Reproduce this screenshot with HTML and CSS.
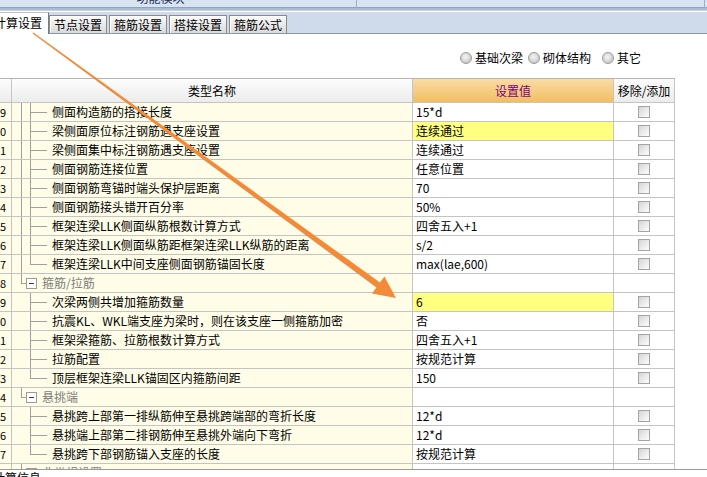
FILE: index.html
```html
<!DOCTYPE html>
<html lang="zh">
<head>
<meta charset="utf-8">
<title>计算设置</title>
<link rel="stylesheet" href="styles.css">
</head>
<body>
<div class="app">
  <div class="topbar">
    <div class="module"><span>功能模块</span></div>
    <div class="module2"></div>
  </div>
  <div class="tabstrip">
    <div class="tab active">计算设置</div>
    <div class="tab">节点设置</div>
    <div class="tab">箍筋设置</div>
    <div class="tab">搭接设置</div>
    <div class="tab">箍筋公式</div>
  </div>
  <div class="options">
    <label class="opt"><span class="radio"></span>基础次梁</label>
    <label class="opt opt2"><span class="radio"></span>砌体结构</label>
    <label class="opt opt3"><span class="radio"></span>其它</label>
  </div>
  <div class="grid">
    <div class="row head">
      <div class="c num"></div>
      <div class="c name hname">类型名称</div>
      <div class="c val hval">设置值</div>
      <div class="c chk hchk">移除/添加</div>
    </div>

    <div class="row"><div class="c num">9</div><div class="c name"><span class="t1 line"></span><span class="t2"></span><span class="txt">侧面构造筋的搭接长度</span></div><div class="c val">15*d</div><div class="c chk"><span class="cb"></span></div></div>
    <div class="row"><div class="c num">10</div><div class="c name"><span class="t1 line"></span><span class="t2"></span><span class="txt">梁侧面原位标注钢筋遇支座设置</span></div><div class="c val yellow">连续通过</div><div class="c chk"><span class="cb"></span></div></div>
    <div class="row"><div class="c num">11</div><div class="c name"><span class="t1 line"></span><span class="t2"></span><span class="txt">梁侧面集中标注钢筋遇支座设置</span></div><div class="c val">连续通过</div><div class="c chk"><span class="cb"></span></div></div>
    <div class="row"><div class="c num">12</div><div class="c name"><span class="t1 line"></span><span class="t2"></span><span class="txt">侧面钢筋连接位置</span></div><div class="c val">任意位置</div><div class="c chk"><span class="cb"></span></div></div>
    <div class="row"><div class="c num">13</div><div class="c name"><span class="t1 line"></span><span class="t2"></span><span class="txt">侧面钢筋弯锚时端头保护层距离</span></div><div class="c val">70</div><div class="c chk"><span class="cb"></span></div></div>
    <div class="row"><div class="c num">14</div><div class="c name"><span class="t1 line"></span><span class="t2"></span><span class="txt">侧面钢筋接头错开百分率</span></div><div class="c val">50%</div><div class="c chk"><span class="cb"></span></div></div>
    <div class="row"><div class="c num">15</div><div class="c name"><span class="t1 line"></span><span class="t2"></span><span class="txt">框架连梁LLK侧面纵筋根数计算方式</span></div><div class="c val">四舍五入+1</div><div class="c chk"><span class="cb"></span></div></div>
    <div class="row"><div class="c num">16</div><div class="c name"><span class="t1 line"></span><span class="t2"></span><span class="txt">框架连梁LLK侧面纵筋距框架连梁LLK纵筋的距离</span></div><div class="c val">s/2</div><div class="c chk"><span class="cb"></span></div></div>
    <div class="row"><div class="c num">17</div><div class="c name"><span class="t1 line"></span><span class="t2 last"></span><span class="txt">框架连梁LLK中间支座侧面钢筋锚固长度</span></div><div class="c val">max(lae,600)</div><div class="c chk"><span class="cb"></span></div></div>

    <div class="row"><div class="c num">18</div><div class="c name"><span class="tg"></span><span class="box"></span><span class="gtxt">箍筋/拉筋</span></div><div class="c val"></div><div class="c chk"></div></div>
    <div class="row"><div class="c num">19</div><div class="c name"><span class="t1"></span><span class="t2"></span><span class="txt">次梁两侧共增加箍筋数量</span></div><div class="c val yellow">6</div><div class="c chk"><span class="cb"></span></div></div>
    <div class="row"><div class="c num">20</div><div class="c name"><span class="t1"></span><span class="t2"></span><span class="txt">抗震KL、WKL端支座为梁时，则在该支座一侧箍筋加密</span></div><div class="c val">否</div><div class="c chk"><span class="cb"></span></div></div>
    <div class="row"><div class="c num">21</div><div class="c name"><span class="t1"></span><span class="t2"></span><span class="txt">框架梁箍筋、拉筋根数计算方式</span></div><div class="c val">四舍五入+1</div><div class="c chk"><span class="cb"></span></div></div>
    <div class="row"><div class="c num">22</div><div class="c name"><span class="t1"></span><span class="t2"></span><span class="txt">拉筋配置</span></div><div class="c val">按规范计算</div><div class="c chk"><span class="cb"></span></div></div>
    <div class="row"><div class="c num">23</div><div class="c name"><span class="t1"></span><span class="t2 last"></span><span class="txt">顶层框架连梁LLK锚固区内箍筋间距</span></div><div class="c val">150</div><div class="c chk"><span class="cb"></span></div></div>

    <div class="row"><div class="c num">24</div><div class="c name"><span class="tg"></span><span class="box"></span><span class="gtxt">悬挑端</span></div><div class="c val"></div><div class="c chk"></div></div>
    <div class="row"><div class="c num">25</div><div class="c name"><span class="t1"></span><span class="t2"></span><span class="txt">悬挑跨上部第一排纵筋伸至悬挑跨端部的弯折长度</span></div><div class="c val">12*d</div><div class="c chk"><span class="cb"></span></div></div>
    <div class="row"><div class="c num">26</div><div class="c name"><span class="t1"></span><span class="t2"></span><span class="txt">悬挑端上部第二排钢筋伸至悬挑外端向下弯折</span></div><div class="c val">12*d</div><div class="c chk"><span class="cb"></span></div></div>
    <div class="row"><div class="c num">27</div><div class="c name"><span class="t1"></span><span class="t2 last"></span><span class="txt">悬挑跨下部钢筋锚入支座的长度</span></div><div class="c val">按规范计算</div><div class="c chk"><span class="cb"></span></div></div>

    <div class="row"><div class="c num">28</div><div class="c name"><span class="tg"></span><span class="box"></span><span class="gtxt">非常规设置</span></div><div class="c val"></div><div class="c chk"></div></div>
  </div>
  <div class="footer">计算信息</div>
</div>
<svg class="arrow" width="707" height="477" viewBox="0 0 707 477">
  <polygon points="33.4,32.4 380,282.6 384.4,276.5 396,298 372,293.5 376.4,287.4 32.6,33.6" fill="#f28a3a"/>
</svg>
</body>
</html>
```

FILE: styles.css
```css
* { box-sizing: border-box; }
html, body {
  margin: 0;
  padding: 0;
}
body {
  width: 707px;
  height: 477px;
  overflow: hidden;
  position: relative;
  background: #ffffff;
  font-family: "Noto Sans CJK SC", "Noto Sans", sans-serif;
  font-size: 12px;
  color: #000;
}
.app {
  width: 707px;
  height: 477px;
  overflow: hidden;
}

/* top module bar */
.topbar {
  height: 12px;
  display: flex;
  background: linear-gradient(to bottom, #d8e4f2 0, #d8e4f2 7px, #8ea3c0 7px, #8ea3c0 8px, #aabcd4 8px, #aabcd4 10px, #c6d4e6 10px, #c6d4e6 11px, #ffffff 11px, #ffffff 12px);
}
.module {
  width: 392px;
  margin-left: -35px;
  height: 8px;
  overflow: hidden;
  border-right: 1px solid #9eb0c8;
  text-align: center;
  color: #1e2e50;
}
.module span {
  display: block;
  line-height: 12px;
  margin-top: -8px;
}
.module2 {
  flex: 1;
  height: 8px;
  margin-right: 2px;
  border-right: 1px solid #9eb0c8;
}

/* tabs */
.tabstrip {
  display: flex;
  align-items: flex-end;
  margin-left: -12px;
  height: 22px;
  background: #cfdbeb;
  border-bottom: 1px solid #8c96a4;
}
.tab {
  width: 58px;
  height: 18px;
  margin-left: 2px;
  border: 1px solid #8a8a8a;
  border-bottom: none;
  background: linear-gradient(to bottom, #fbfbfb, #d9d9d9);
  box-shadow: inset 1px 1px 0 #ffffff;
  line-height: 17px;
  text-align: center;
  white-space: nowrap;
}
.tab.active {
  width: 61px;
  height: 22px;
  margin-left: 0;
  margin-bottom: -1px;
  padding-bottom: 2px;
  background: #ffffff;
  border: none;
  border-top: 1px solid #c4c4c4;
  border-right: 1px solid #7c7c7c;
  box-shadow: none;
  line-height: 19px;
}
.tab.active + .tab { margin-left: 0; }

/* options */
.options {
  height: 44px;
  padding-top: 4px;
  padding-right: 66px;
  display: flex;
  justify-content: flex-end;
  align-items: center;
}
.opt {
  display: flex;
  align-items: center;
  line-height: 14px;
  white-space: nowrap;
}
.opt2 { margin-left: 5px; }
.opt3 { margin-left: 11px; }
.radio {
  width: 12px;
  height: 12px;
  margin-right: 3px;
  border-radius: 50%;
  border: 1px solid #9a9a9a;
  background: radial-gradient(circle at 45% 40%, #f4f4f4 0, #dcdcdc 45%, #b4b4b4 100%);
}

/* grid */
.grid {
  height: 392px;
  overflow: hidden;
  border-bottom: 1px solid #9a9a9a;
}
.row {
  display: flex;
  width: 688px;
  margin-left: -13px;
  height: 19px;
}
.row.head {
  height: 25px;
  border-top: 1px solid #b4b4b4;
}
.c {
  height: 100%;
  border-right: 1px solid #c4c4c4;
  border-bottom: 1px solid #c4c4c4;
  white-space: nowrap;
  overflow: hidden;
  line-height: 18px;
}
.num {
  width: 25px;
  text-align: right;
  padding-right: 5px;
  background: #fffde8;
  font-size: 11px;
}
.name {
  width: 401px;
  display: flex;
  align-items: stretch;
  padding-left: 9px;
  background: #fffde8;
}
.val {
  width: 201px;
  padding-left: 3px;
  background: #ffffff;
}
.val.yellow { background: #ffff80; }
.chk {
  width: 61px;
  background: #ffffff;
  display: flex;
  align-items: center;
  justify-content: center;
}

.head .c { line-height: 23px; }
.head .num { background: linear-gradient(to bottom, #fdfdfd, #ececec); }
.hname {
  justify-content: center;
  padding-left: 0;
  background: linear-gradient(to bottom, #fdfdfd, #ececec);
}
.hval {
  text-align: center;
  padding-left: 0;
  color: #800080;
  background: linear-gradient(to bottom, #fadca4, #f1bf62);
}
.hchk {
  background: linear-gradient(to bottom, #fbfbfb, #ececec);
}

/* tree lines */
.t1 { width: 9px; flex: none; }
.t1.line {
  background: linear-gradient(#a0a0a0, #a0a0a0) no-repeat 0 0 / 1px 100%;
}
.t2 {
  width: 17px;
  flex: none;
  background:
    linear-gradient(#a0a0a0, #a0a0a0) no-repeat 0 0 / 1px 100%,
    linear-gradient(#a0a0a0, #a0a0a0) no-repeat 0 9px / 100% 1px;
}
.t2.last {
  background:
    linear-gradient(#a0a0a0, #a0a0a0) no-repeat 0 0 / 1px 10px,
    linear-gradient(#a0a0a0, #a0a0a0) no-repeat 0 9px / 100% 1px;
}
.txt { margin-left: 5px; }
.tg {
  width: 5px;
  flex: none;
  background:
    linear-gradient(#a0a0a0, #a0a0a0) no-repeat 0 0 / 1px 10px,
    linear-gradient(#a0a0a0, #a0a0a0) no-repeat 0 9px / 100% 1px;
}
.box {
  width: 11px;
  height: 11px;
  flex: none;
  align-self: center;
  border: 1px solid #9c9c9c;
  background: linear-gradient(#3c3c3c, #3c3c3c) no-repeat center / 5px 1px, #ffffff;
}
.gtxt {
  margin-left: 5px;
  color: #7c7c7c;
}

/* checkbox */
.cb {
  width: 12px;
  height: 12px;
  border: 1px solid #a4a4a4;
  background: linear-gradient(135deg, #d4d4d4 0%, #eeeeee 60%, #fcfcfc 100%);
}

.footer {
  margin-left: -7px;
  padding-top: 1px;
  line-height: 14px;
  white-space: nowrap;
}

.arrow {
  position: absolute;
  left: 0;
  top: 0;
  pointer-events: none;
}
```
